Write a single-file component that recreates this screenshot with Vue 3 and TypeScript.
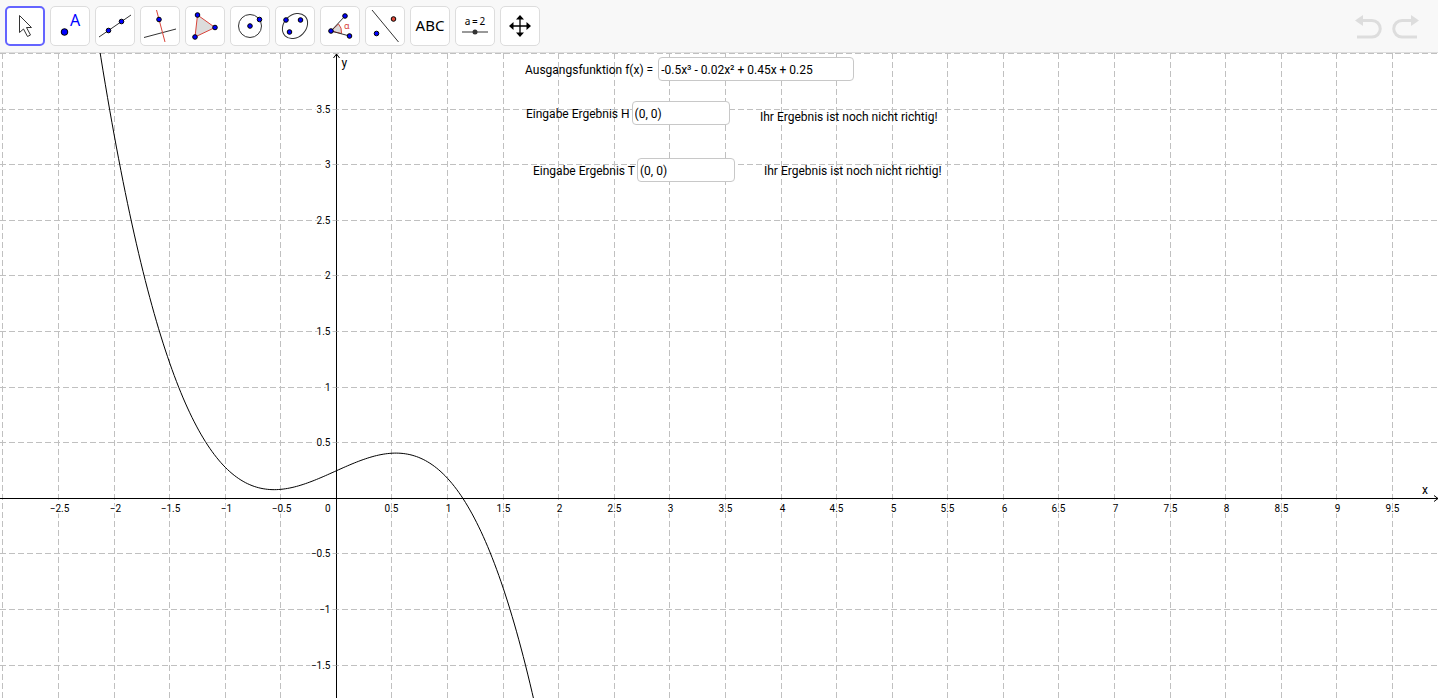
<script setup lang="ts">
import { computed, onBeforeUnmount, onMounted, ref } from 'vue'

const origin = { x: 336.5, y: 445.5 }
const unit = 111.16

const board = ref<HTMLElement | null>(null)
const width = ref(1438)
const height = ref(645)
const selected = ref('move')
const fx = ref('-0.5x³ - 0.02x² + 0.45x + 0.25')
const answerH = ref('(0, 0)')
const answerT = ref('(0, 0)')

const tools = [
  { id: 'move', label: 'Bewegen' },
  { id: 'point', label: 'Punkt' },
  { id: 'line', label: 'Gerade' },
  { id: 'perpendicular', label: 'Senkrechte Gerade' },
  { id: 'polygon', label: 'Vieleck' },
  { id: 'circle', label: 'Kreis' },
  { id: 'conic', label: 'Ellipse' },
  { id: 'angle', label: 'Winkel' },
  { id: 'mirror', label: 'Spiegeln' },
  { id: 'text', label: 'Text' },
  { id: 'slider', label: 'Schieberegler' },
  { id: 'pan', label: 'Verschieben' },
]

const measure = () => {
  if (!board.value) return
  width.value = board.value.clientWidth
  height.value = board.value.clientHeight
}
onMounted(() => {
  measure()
  window.addEventListener('resize', measure)
})
onBeforeUnmount(() => window.removeEventListener('resize', measure))

// Lines sit on pixel centres so that they stay crisp.
const snap = (v: number) => Math.ceil(v) - 0.5
const format = (v: number) => String(v).replace('-', '−')

const columns = computed(() => {
  const list: { value: number; at: number }[] = []
  const last = Math.floor((width.value - origin.x) / (unit / 2))
  for (let k = -6; k <= last; k++) list.push({ value: k / 2, at: snap(origin.x - 0.1 + (k * unit) / 2) })
  return list
})
const rows = computed(() => {
  const list: { value: number; at: number }[] = []
  const first = -Math.floor((height.value - origin.y) / (unit / 2))
  for (let k = first; k <= 8; k++) list.push({ value: k / 2, at: snap(origin.y - 0.2 - (k * unit) / 2) })
  return list
})
const columnLabels = computed(() => columns.value.filter((c) => c.value !== 0 && c.at > 20))
const rowLabels = computed(() => rows.value.filter((r) => r.value !== 0 && r.at > 20))
const labelShift = (v: number) => (v < 0 || Number.isInteger(v) ? 1 : 0)

const curve = computed(() => {
  const points: string[] = []
  for (let x = -2.2; x <= 1.9; x += 0.02) {
    const y = -0.5 * x ** 3 - 0.02 * x ** 2 + 0.45 * x + 0.25
    points.push(`${(origin.x + x * unit).toFixed(2)},${(origin.y - y * unit).toFixed(2)}`)
  }
  return points.join(' ')
})
</script>

<template>
  <div class="app">
    <header class="toolbar">
      <div class="tools">
        <button
          v-for="tool in tools"
          :key="tool.id"
          type="button"
          class="tool"
          :class="{ active: selected === tool.id }"
          :aria-label="tool.label"
          :aria-pressed="selected === tool.id"
          @click="selected = tool.id"
        >
          <svg width="36" height="36" viewBox="0 0 36 36" aria-hidden="true">
            <path v-if="tool.id === 'move'" class="ink" fill="#fff" d="M12.500 7.500V24.500L16.500 21L20.500 28.500L23.500 27L19.500 19.500H24.500Z" />
            <g v-else-if="tool.id === 'point'">
              <circle class="dot" cx="12.500" cy="24" r="3.300" />
              <text class="letter" x="18" y="18">A</text>
            </g>
            <g v-else-if="tool.id === 'line'">
              <path class="ink" d="M2 29L34 7" />
              <circle class="dot" cx="11.500" cy="22.500" r="2.300" />
              <circle class="dot" cx="24.500" cy="13.500" r="2.300" />
            </g>
            <g v-else-if="tool.id === 'perpendicular'">
              <path class="ink" d="M2 29.500L34 21" />
              <path class="red" d="M14.500 2L23 34" />
              <circle class="dot" cx="17" cy="11.500" r="2.300" />
            </g>
            <g v-else-if="tool.id === 'polygon'">
              <path class="red" fill="#dcdcdc" d="M10.500 7L28 19.500L8 29Z" />
              <circle class="dot" cx="10.500" cy="7" r="2.300" />
              <circle class="dot" cx="28" cy="19.500" r="2.300" />
              <circle class="dot" cx="8" cy="29" r="2.300" />
            </g>
            <g v-else-if="tool.id === 'circle'">
              <circle class="ink" cx="18" cy="18" r="11.500" />
              <circle class="dot" cx="18" cy="18" r="2.300" />
              <circle class="dot" cx="27.500" cy="11.500" r="2.300" />
            </g>
            <g v-else-if="tool.id === 'conic'">
              <ellipse class="ink" cx="18" cy="18" rx="14" ry="11" transform="rotate(-45 18 18)" />
              <circle class="dot" cx="9" cy="12" r="2.300" />
              <circle class="dot" cx="23.500" cy="12" r="2.300" />
              <circle class="dot" cx="12.500" cy="24" r="2.300" />
            </g>
            <g v-else-if="tool.id === 'angle'">
              <path class="red" fill="#dcdcdc" d="M9 23L16.500 16Q20 19.500 19.500 25.500Z" />
              <path class="ink" d="M23 8L9 23L27.500 28" />
              <circle class="dot" cx="23" cy="8" r="2.300" />
              <circle class="dot" cx="9" cy="23" r="2.300" />
              <circle class="dot" cx="27.500" cy="28" r="2.300" />
              <text class="alpha" x="22" y="21">α</text>
            </g>
            <g v-else-if="tool.id === 'mirror'">
              <path class="ink" d="M5 2L31.500 34" />
              <circle class="dot warm" cx="26.500" cy="11" r="2.300" />
              <circle class="dot" cx="9.500" cy="25.500" r="2.300" />
            </g>
            <text v-else-if="tool.id === 'text'" class="abc" x="18" y="23">ABC</text>
            <g v-else-if="tool.id === 'slider'">
              <text class="assign" x="18" y="17">a&#8201;=&#8201;2</text>
              <path d="M5 24H31" stroke="#777" stroke-width="1.500" />
              <circle cx="18" cy="24" r="2.500" fill="#333" />
            </g>
            <g v-else>
              <path d="M18 10V26M10 18H26" stroke="#000" stroke-width="1.300" />
              <path d="M18 7L22 11.500H14ZM18 29L22 24.500H14ZM7 18L11.500 14V22ZM29 18L24.500 14V22Z" />
            </g>
          </svg>
        </button>
      </div>
      <div class="history">
        <button type="button" aria-label="Rückgängig">
          <svg width="30" height="28" viewBox="0 0 30 28" aria-hidden="true">
            <path class="bend" d="M9 8.500H19A8 8 0 0 1 19 25H4" />
            <path fill="#ddd" d="M2 8.500L10 3V14Z" />
          </svg>
        </button>
        <button type="button" aria-label="Wiederherstellen">
          <svg width="30" height="28" viewBox="0 0 30 28" aria-hidden="true">
            <path class="bend" d="M21 8.500H11A8 8 0 0 0 11 25H26" />
            <path fill="#ddd" d="M28 8.500L20 3V14Z" />
          </svg>
        </button>
      </div>
    </header>

    <main ref="board" class="board">
      <svg class="plot" role="img" aria-label="Graph der Funktion f">
        <g class="grid">
          <line v-for="c in columns" :key="c.value" :x1="c.at" :x2="c.at" y1="0" :y2="height" />
          <line v-for="r in rows" :key="r.value" x1="0" :x2="width" :y1="r.at" :y2="r.at" />
        </g>
        <g class="axis">
          <path :d="`M0 ${origin.y}H${width}M${width - 4} ${origin.y - 3}L${width} ${origin.y}L${width - 4} ${origin.y + 3}`" />
          <path :d="`M${origin.x} ${height}V1M${origin.x - 3} 5L${origin.x} 1L${origin.x + 3} 5`" />
          <path v-for="r in rowLabels" :key="r.value" :d="`M${origin.x - 4} ${r.at}H${origin.x}`" class="tick" />
        </g>
        <g class="ticks">
          <text v-for="c in columnLabels" :key="c.value" :x="c.at + labelShift(c.value)" :y="origin.y + 13" text-anchor="middle">{{ format(c.value) }}</text>
          <text v-for="r in rowLabels" :key="r.value" :x="origin.x - 6" :y="r.at + 3" text-anchor="end">{{ format(r.value) }}</text>
          <text :x="origin.x - 6" :y="origin.y + 13" text-anchor="end">0</text>
        </g>
        <polyline class="curve" :points="curve" />
        <text class="name" :x="width - 16" :y="origin.y - 5">x</text>
        <text class="name" :x="origin.x + 5" y="14">y</text>
      </svg>

      <div class="field function">
        <label for="fx">Ausgangsfunktion f(x) =</label>
        <input id="fx" v-model="fx" type="text" />
      </div>
      <div class="field high">
        <label for="answer-h">Eingabe Ergebnis H</label>
        <input id="answer-h" v-model="answerH" type="text" />
      </div>
      <div class="field low">
        <label for="answer-t">Eingabe Ergebnis T</label>
        <input id="answer-t" v-model="answerT" type="text" />
      </div>
      <p class="feedback high">Ihr Ergebnis ist noch nicht richtig!</p>
      <p class="feedback low">Ihr Ergebnis ist noch nicht richtig!</p>
    </main>
  </div>
</template>

<style>
body {
  margin: 0;
  background: #fff;
}
</style>

<style scoped>
.app {
  display: flex;
  flex-direction: column;
  height: 100vh;
  box-sizing: border-box;
  padding: 0 2px 2px 0;
  font-family: Roboto, "Liberation Sans", sans-serif;
  font-size: 12px;
  color: #000;
}
.toolbar {
  display: flex;
  justify-content: space-between;
  align-items: center;
  box-sizing: border-box;
  height: 53px;
  padding: 0 17px 0 5px;
  background: #f8f8f8;
  border-bottom: 1px solid #ddd;
}
.tools {
  display: flex;
  gap: 5px;
}
.tool {
  display: flex;
  align-items: center;
  justify-content: center;
  box-sizing: border-box;
  width: 40px;
  height: 40px;
  padding: 0;
  border: 1px solid #ddd;
  border-radius: 5px;
  background: #fff;
}
.tool.active {
  border: 2px solid #6464ff;
}
.history {
  display: flex;
  gap: 8px;
}
.history button {
  display: flex;
  padding: 0;
  border: 0;
  background: none;
}
.ink,
.red {
  stroke: #333;
  stroke-width: 1;
}
.red {
  stroke: #d9443a;
}
circle.ink,
ellipse.ink,
g > .ink {
  fill: none;
}
.dot {
  fill: #00f;
  stroke: #000;
  stroke-width: 1;
}
.dot.warm {
  fill: #e04a3a;
}
.letter {
  fill: #00f;
  font: 16px "Noto Sans", sans-serif;
}
.alpha {
  fill: #d9443a;
  font: 9px "Noto Sans", sans-serif;
}
.abc {
  font: 15px "Noto Sans", sans-serif;
  text-anchor: middle;
}
.assign {
  font: 10px "Noto Sans", sans-serif;
  text-anchor: middle;
}
.bend {
  fill: none;
  stroke: #ddd;
  stroke-width: 3;
}
.board {
  position: relative;
  flex: 1;
  min-height: 0;
  overflow: hidden;
}
.plot {
  display: block;
  width: 100%;
  height: 100%;
}
.grid line {
  stroke: #c0c0c0;
  stroke-dasharray: 6 3;
}
.axis path {
  fill: none;
  stroke: #000;
}
.axis .tick {
  stroke: #c0c0c0;
}
.ticks text {
  font-size: 10px;
  stroke: #fff;
  stroke-width: 3;
  paint-order: stroke;
}
.curve {
  fill: none;
  stroke: #000;
}
.name {
  font-size: 12px;
}
.field {
  position: absolute;
  display: flex;
  align-items: center;
  white-space: pre;
}
.field input {
  box-sizing: border-box;
  width: 98px;
  height: 24px;
  margin: 0;
  padding: 0 2px;
  border: 1px solid #c8c8c8;
  border-radius: 4px;
  background: #fff;
  font: inherit;
  color: inherit;
}
.field.function {
  left: 525px;
  top: 4px;
  gap: 5px;
}
.field.function input {
  width: 196px;
}
.field.high {
  left: 526px;
  top: 48px;
  gap: 2px;
}
.field.low {
  left: 533px;
  top: 105px;
  gap: 2px;
}
.field label {
  padding-top: 1px;
}
.field input {
  padding-top: 2px;
}
.feedback {
  position: absolute;
  margin: 0;
  line-height: 16px;
  white-space: nowrap;
}
.feedback.high {
  left: 760px;
  top: 56px;
}
.feedback.low {
  left: 764px;
  top: 110px;
}
</style>
